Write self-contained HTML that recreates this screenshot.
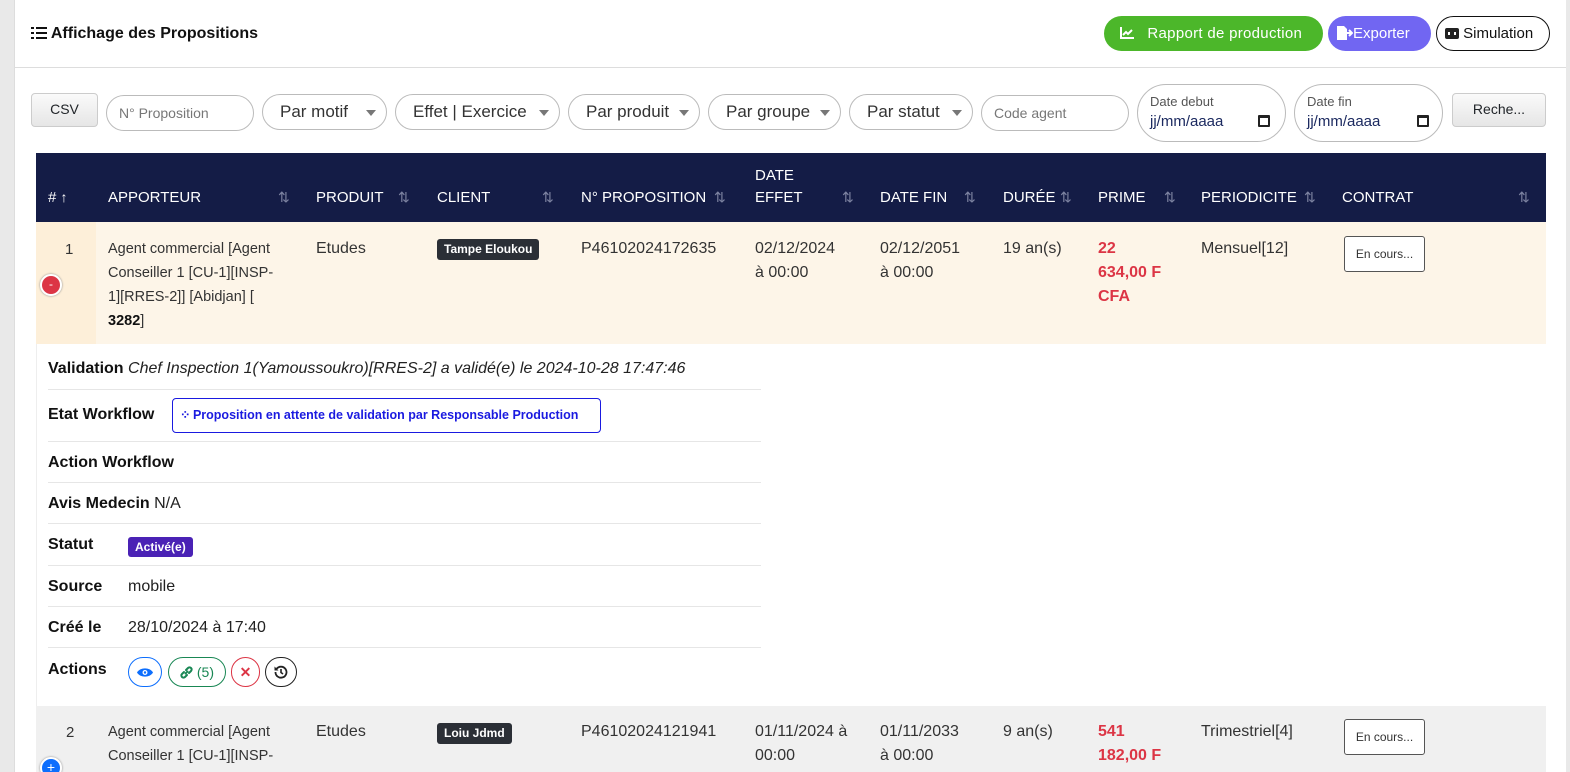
<!DOCTYPE html>
<html><head><meta charset="utf-8"><style>
*{box-sizing:border-box;margin:0;padding:0}
html,body{width:1570px;height:772px;overflow:hidden}
body{background:#e9e9e9;font-family:"Liberation Sans",sans-serif;color:#212529;position:relative}
.card{position:absolute;left:14px;top:0;width:1552px;height:772px;background:#fff;border-left:1px solid #ddd}
.a{position:absolute;white-space:nowrap}
.pill{position:absolute;height:36px;border:1px solid #bbb;border-radius:18px;background:#fff;font-size:17px;color:#333;padding:0 0 0 17px;line-height:34px}
.pill .c{position:absolute;right:10px;top:15px;border-left:5px solid transparent;border-right:5px solid transparent;border-top:6px solid #777}
.inp{position:absolute;height:36px;border:1px solid #bbb;border-radius:18px;font-size:14px;color:#777;padding-left:12px;line-height:34px}
.btn{position:absolute;height:34px;border:1px solid #ccc;border-radius:4px;background:linear-gradient(#fafafa,#e6e6e6);font-size:14px;text-align:center;line-height:30px}
.date{position:absolute;height:58px;border:1px solid #bbb;border-radius:29px;font-size:13px;color:#555}
.hd{position:absolute;left:36px;top:153px;width:1510px;height:69px;background:#141c46;color:#fff;font-size:15px}
.hd span{position:absolute;white-space:nowrap}
.ar{color:#7c82a0;font-size:14px}
.r1{position:absolute;left:36px;top:222px;width:1510px;height:122px;background:#fdf5e8}
.cell{position:absolute;font-size:15px;line-height:24px;color:#333}
.badge{position:absolute;background:#2b2f36;color:#fff;font-weight:bold;font-size:12px;border-radius:3px;padding:0 7px;height:21px;line-height:21px}
.red{color:#dc3545;font-weight:bold}
.enc{position:absolute;border:1px solid #555;border-radius:3px;width:81px;height:36px;font-size:12px;text-align:center;line-height:34px;color:#333;background:#fff}
.det{position:absolute;left:36px;top:344px;width:1510px;height:362px;border-left:1px solid #eee}
.line{position:absolute;left:12px;width:713px;border-top:1px solid #e6e6e6}
.lab{position:absolute;left:12px;font-weight:bold;font-size:16px;color:#111}
.val{position:absolute;font-size:16px;color:#222}
.circ{position:absolute;height:30px;border-radius:15px;border:1px solid;top:657px;text-align:center;line-height:28px;font-size:14px}
</style></head><body>
<div class="card"></div>
<div class="a" style="left:31px;top:25px;font-weight:bold;font-size:16px;color:#111">
<svg width="16" height="12" viewBox="0 0 16 12" style="vertical-align:-1px"><g fill="#111"><rect x="0" y="0" width="3" height="2"/><rect x="0" y="5" width="3" height="2"/><rect x="0" y="10" width="3" height="2"/><rect x="5" y="0" width="11" height="2"/><rect x="5" y="5" width="11" height="2"/><rect x="5" y="10" width="11" height="2"/></g></svg> Affichage des Propositions</div>
<div class="a" style="left:1104px;top:16px;width:219px;height:35px;border-radius:18px;background:#4cb72a;color:#fff;font-size:15px;line-height:35px;padding-left:16px;letter-spacing:.3px">
<svg width="14" height="12" viewBox="0 0 14 12" style="vertical-align:-1px"><path d="M1 0v11h13" stroke="#fff" stroke-width="2" fill="none"/><path d="M3 8l3-3 2 2 4-4" stroke="#fff" stroke-width="2" fill="none"/></svg>&nbsp;&nbsp; Rapport de production</div>
<div class="a" style="left:1328px;top:16px;width:103px;height:35px;border-radius:18px;background:#7166f2;color:#fff;font-size:15px;line-height:35px;padding-left:9px">
<svg width="16" height="14" viewBox="0 0 16 14" style="vertical-align:-2px"><path d="M0 0h7l3 3v11H0z" fill="#fff"/><path d="M9 7h5M12 4l3 3-3 3" stroke="#fff" stroke-width="2" fill="none"/></svg>Exporter</div>
<div class="a" style="left:1436px;top:16px;width:114px;height:35px;border-radius:18px;border:1px solid #111;font-size:15px;line-height:33px;padding-left:8px;color:#111">
<svg width="14" height="11" viewBox="0 0 14 11" style="vertical-align:-1px"><rect x="0" y="0" width="14" height="11" rx="2" fill="#222"/><rect x="3" y="4" width="2" height="3" fill="#fff"/><rect x="9" y="4" width="2" height="3" fill="#fff"/></svg> Simulation</div>
<div class="a" style="left:15px;top:67px;width:1551px;border-top:1px solid #ddd"></div>

<div class="btn" style="left:31px;top:93px;width:67px">CSV</div>
<div class="inp" style="left:106px;top:95px;width:148px">N° Proposition</div>
<div class="pill" style="left:262px;top:94px;width:125px">Par motif<i class="c"></i></div>
<div class="pill" style="left:395px;top:94px;width:165px">Effet | Exercice<i class="c"></i></div>
<div class="pill" style="left:568px;top:94px;width:132px">Par produit<i class="c"></i></div>
<div class="pill" style="left:708px;top:94px;width:133px">Par groupe<i class="c"></i></div>
<div class="pill" style="left:849px;top:94px;width:124px">Par statut<i class="c"></i></div>
<div class="inp" style="left:981px;top:95px;width:148px">Code agent</div>
<div class="date" style="left:1137px;top:84px;width:149px"><div class="a" style="left:12px;top:9px">Date debut</div><div class="a" style="left:12px;top:28px;font-size:15px;color:#1c2a60">jj/mm/aaaa</div><div class="a" style="left:120px;top:30px;width:12px;height:12px;border:2px solid #222;border-top-width:3px;border-radius:1px"></div></div>
<div class="date" style="left:1294px;top:84px;width:149px"><div class="a" style="left:12px;top:9px">Date fin</div><div class="a" style="left:12px;top:28px;font-size:15px;color:#1c2a60">jj/mm/aaaa</div><div class="a" style="left:122px;top:30px;width:12px;height:12px;border:2px solid #222;border-top-width:3px;border-radius:1px"></div></div>
<div class="btn" style="left:1452px;top:93px;width:94px">Reche...</div>

<div class="hd">
<span style="left:12px;top:36px"># <span class="ar" style="position:static;color:#fff">↑</span></span>
<span style="left:72px;top:36px">APPORTEUR</span><span class="ar" style="left:242px;top:36px">⇅</span>
<span style="left:280px;top:36px">PRODUIT</span><span class="ar" style="left:362px;top:36px">⇅</span>
<span style="left:401px;top:36px">CLIENT</span><span class="ar" style="left:506px;top:36px">⇅</span>
<span style="left:545px;top:36px">N° PROPOSITION</span><span class="ar" style="left:678px;top:36px">⇅</span>
<span style="left:719px;top:14px">DATE</span><span style="left:719px;top:36px">EFFET</span><span class="ar" style="left:806px;top:36px">⇅</span>
<span style="left:844px;top:36px">DATE FIN</span><span class="ar" style="left:928px;top:36px">⇅</span>
<span style="left:967px;top:36px">DURÉE</span><span class="ar" style="left:1024px;top:36px">⇅</span>
<span style="left:1062px;top:36px">PRIME</span><span class="ar" style="left:1128px;top:36px">⇅</span>
<span style="left:1165px;top:36px">PERIODICITE</span><span class="ar" style="left:1268px;top:36px">⇅</span>
<span style="left:1306px;top:36px">CONTRAT</span><span class="ar" style="left:1482px;top:36px">⇅</span>
</div>

<div class="r1"><div class="a" style="left:0;top:0;width:60px;height:122px;background:#fdefd9"></div></div>
<div class="cell" style="left:65px;top:238px">1</div>
<div class="a" style="left:40px;top:274px;width:22px;height:22px;border-radius:11px;background:#dc3545;border:2px solid #fff;box-shadow:0 0 2px #888;color:#fff;font-size:12px;text-align:center;line-height:16px">-</div>
<div class="cell" style="left:108px;top:237px;width:200px;font-size:14.5px">Agent commercial [Agent<br>Conseiller 1 [CU-1][INSP-<br>1][RRES-2]] [Abidjan] [<br><b style="color:#111">3282</b>]</div>
<div class="cell" style="left:316px;top:237px;font-size:16px">Etudes</div>
<div class="badge" style="left:437px;top:239px">Tampe Eloukou</div>
<div class="cell" style="left:581px;top:237px;font-size:16px">P46102024172635</div>
<div class="cell" style="left:755px;top:237px;font-size:16px">02/12/2024<br>à 00:00</div>
<div class="cell" style="left:880px;top:237px;font-size:16px">02/12/2051<br>à 00:00</div>
<div class="cell" style="left:1003px;top:237px;font-size:16px">19 an(s)</div>
<div class="cell red" style="left:1098px;top:237px;font-size:16px">22<br>634,00 F<br>CFA</div>
<div class="cell" style="left:1201px;top:237px;font-size:16px">Mensuel[12]</div>
<div class="enc" style="left:1344px;top:236px">En cours...</div>

<div class="det"></div>
<div class="lab" style="left:48px;top:360px">Validation <i style="font-weight:normal;color:#222">Chef Inspection 1(Yamoussoukro)[RRES-2] a validé(e) le 2024-10-28 17:47:46</i></div>
<div class="line" style="left:48px;top:389px"></div>
<div class="lab" style="left:48px;top:406px">Etat Workflow</div>
<div class="a" style="left:172px;top:398px;width:429px;height:35px;border:1px solid #1a1ae0;border-radius:4px;color:#1a1ae0;font-size:12.5px;font-weight:bold;line-height:33px;padding-left:7px"><span style="letter-spacing:-1px">⁘</span> Proposition en attente de validation par Responsable Production</div>
<div class="line" style="left:48px;top:441px"></div>
<div class="lab" style="left:48px;top:454px">Action Workflow</div>
<div class="line" style="left:48px;top:482px"></div>
<div class="lab" style="left:48px;top:495px">Avis Medecin <span style="font-weight:normal;color:#222">N/A</span></div>
<div class="line" style="left:48px;top:523px"></div>
<div class="lab" style="left:48px;top:536px">Statut</div>
<div class="a" style="left:128px;top:537px;height:20px;padding:0 7px;background:#4a22b5;color:#fff;font-size:12px;font-weight:bold;border-radius:3px;line-height:20px">Activé(e)</div>
<div class="line" style="left:48px;top:565px"></div>
<div class="lab" style="left:48px;top:578px">Source</div><div class="val" style="left:128px;top:578px">mobile</div>
<div class="line" style="left:48px;top:606px"></div>
<div class="lab" style="left:48px;top:619px">Créé le</div><div class="val" style="left:128px;top:619px">28/10/2024 à 17:40</div>
<div class="line" style="left:48px;top:647px"></div>
<div class="lab" style="left:48px;top:661px">Actions</div>
<div class="circ" style="left:128px;width:34px;border-color:#0d6efd;color:#0d6efd"><svg width="16" height="11" viewBox="0 0 16 11" style="vertical-align:-1px"><path d="M0 5.5C3 0 13 0 16 5.5 13 11 3 11 0 5.5z" fill="#0d6efd"/><circle cx="8" cy="5.5" r="2.5" fill="#fff"/><circle cx="8" cy="5.5" r="1.2" fill="#0d6efd"/></svg></div>
<div class="circ" style="left:168px;width:58px;border-color:#198754;color:#198754"><svg width="13" height="13" viewBox="0 0 13 13" style="vertical-align:-2px"><path d="M5.5 7.5l2-2M4 6L2 8a2.1 2.1 0 003 3l2-2M9 7l2-2a2.1 2.1 0 00-3-3L6 4" stroke="#198754" stroke-width="2" fill="none" stroke-linecap="round"/></svg> (5)</div>
<div class="circ" style="left:231px;width:29px;border-color:#dc3545;color:#dc3545;font-weight:bold">✕</div>
<div class="circ" style="left:265px;width:32px;border-color:#222;color:#222"><svg width="14" height="14" viewBox="0 0 14 14" style="vertical-align:-2px"><path d="M2.5 4A5.5 5.5 0 1 1 1.5 7" stroke="#222" stroke-width="1.8" fill="none"/><path d="M0.5 1.5v4h4z" fill="#222"/><path d="M7 4v3.5l2 1.5" stroke="#222" stroke-width="1.6" fill="none"/></svg></div>

<div class="a" style="left:36px;top:706px;width:1510px;height:66px;background:#f0f0f0"></div>
<div class="cell" style="left:66px;top:721px">2</div>
<div class="a" style="left:40px;top:757px;width:22px;height:22px;border-radius:11px;background:#0d6efd;border:2px solid #fff;box-shadow:0 0 2px #888;color:#fff;font-size:14px;text-align:center;line-height:17px">+</div>
<div class="cell" style="left:108px;top:720px;width:200px;font-size:14.5px">Agent commercial [Agent<br>Conseiller 1 [CU-1][INSP-</div>
<div class="cell" style="left:316px;top:720px;font-size:16px">Etudes</div>
<div class="badge" style="left:437px;top:723px">Loiu Jdmd</div>
<div class="cell" style="left:581px;top:720px;font-size:16px">P46102024121941</div>
<div class="cell" style="left:755px;top:720px;font-size:16px">01/11/2024 à<br>00:00</div>
<div class="cell" style="left:880px;top:720px;font-size:16px">01/11/2033<br>à 00:00</div>
<div class="cell" style="left:1003px;top:720px;font-size:16px">9 an(s)</div>
<div class="cell red" style="left:1098px;top:720px;font-size:16px">541<br>182,00 F</div>
<div class="cell" style="left:1201px;top:720px;font-size:16px">Trimestriel[4]</div>
<div class="enc" style="left:1344px;top:719px">En cours...</div>
</body></html>
